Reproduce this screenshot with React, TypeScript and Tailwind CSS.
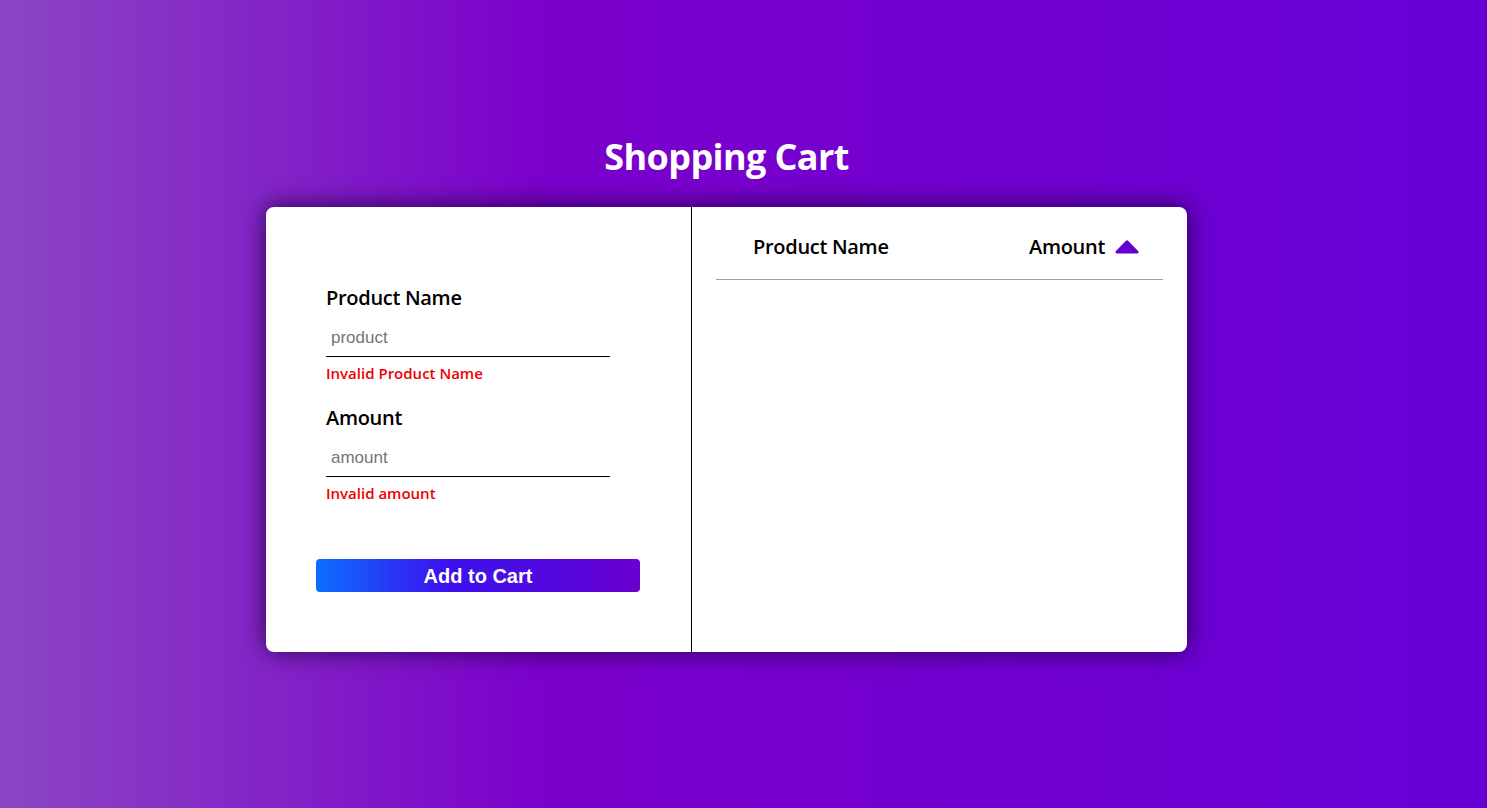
import type React from 'react'

const labelFont = { fontFamily: '"Open Sans", "Noto Sans", sans-serif' }

const SortUp: React.FC = () => (
  <svg width="24" height="14" viewBox="0 0 24 14" className="ml-[10px]">
    <path
      d="M12 1.8 L22 12 L2 12 Z"
      fill="#6600cc"
      stroke="#6600cc"
      strokeWidth="3"
      strokeLinejoin="round"
    />
  </svg>
)

const Field: React.FC<{ label: string; placeholder: string; error: string }> = ({
  label,
  placeholder,
  error,
}) => (
  <div className="flex flex-col">
    <label className="text-[20px] leading-[28px] font-semibold text-black tracking-[-0.3px]" style={labelFont}>
      {label}
    </label>
    <input
      placeholder={placeholder}
      className="mt-[5px] w-[284px] h-[40px] pl-[5px] pt-[3px] border-b border-black outline-none text-[17px] placeholder:text-[#757575] font-['Liberation_Sans',Arial,sans-serif]"
    />
    <span className="mt-[6px] text-[15px] leading-[20px] font-semibold text-[#ee0000]" style={labelFont}>
      {error}
    </span>
  </div>
)

export default function App() {
  return (
    <div className="min-h-screen w-full flex flex-col items-center pt-[133px] pr-[34px] bg-[linear-gradient(90deg,#8b46c3_0%,#7b00cb_37%,#6700d6_100%)]">
      <h1 className="text-[36px] leading-[48px] font-bold text-white mb-[26px] tracking-[-0.6px]" style={labelFont}>
        Shopping Cart
      </h1>

      <div className="flex w-[921px] h-[445px] bg-white rounded-[8px] shadow-[0_-1px_24px_rgba(25,0,55,0.85)]">
        {/* form side */}
        <div className="w-[426px] border-r border-black flex flex-col pl-[60px] pt-[77px]">
          <Field label="Product Name" placeholder="product" error="Invalid Product Name" />
          <div className="mt-[21px]">
            <Field label="Amount" placeholder="amount" error="Invalid amount" />
          </div>
          <button className="mt-[56px] -ml-[10px] w-[324px] h-[33px] rounded-[4px] text-white text-[20px] font-bold bg-[linear-gradient(90deg,#0d6efd_0%,#3a12f0_40%,#6a00d0_100%)] font-['Liberation_Sans',Arial,sans-serif]">
            Add to Cart
          </button>
        </div>

        {/* cart list side */}
        <div className="flex-1 px-6 pt-6">
          <div className="flex items-center justify-between pl-[37px] pr-[24px] pt-[2px] pb-[18px] border-b border-[#a0a0a0]">
            <span className="text-[20px] leading-[28px] font-semibold text-black tracking-[-0.3px]" style={labelFont}>
              Product Name
            </span>
            <div className="flex items-center">
              <span className="text-[20px] leading-[28px] font-semibold text-black tracking-[-0.3px]" style={labelFont}>
                Amount
              </span>
              <SortUp />
            </div>
          </div>
        </div>
      </div>
    </div>
  )
}
